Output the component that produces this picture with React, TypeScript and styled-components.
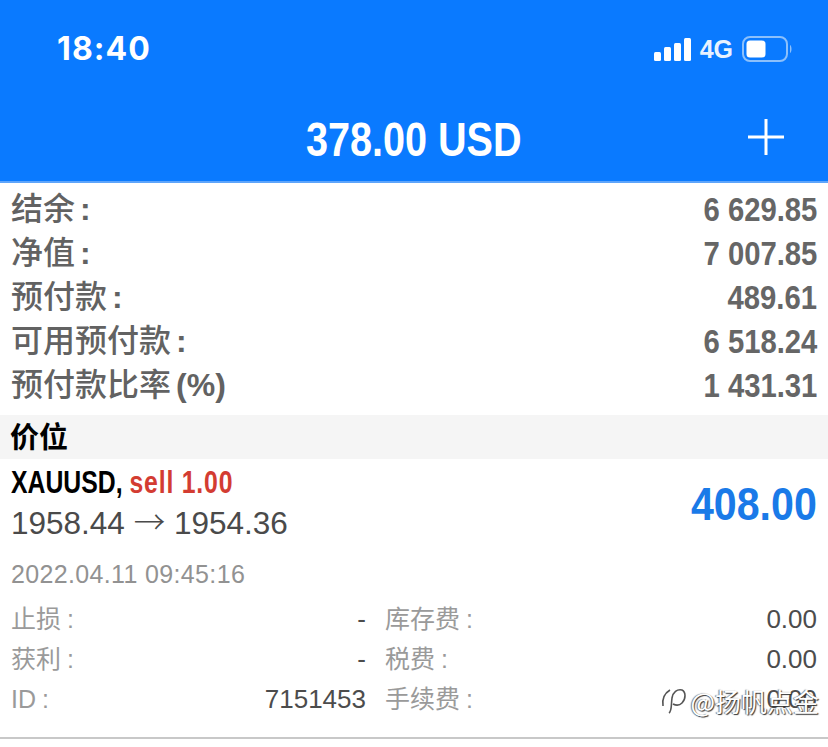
import React from "react";
import styled, { createGlobalStyle } from "styled-components";

const Global = createGlobalStyle`
  html, body { margin: 0; padding: 0; background: #fff; }
  body { font-family: "Liberation Sans", "Noto Sans CJK SC", sans-serif; }
`;
const Page = styled.div`width: 828px; height: 747px; overflow: hidden; background: #fff; display: flex; flex-direction: column;`;
const Header = styled.header`height: 181px; background: #0a7aff; border-bottom: 2px solid #5ea5fb; display: flex; flex-direction: column; color: #fff; flex: none;`;
const StatusBar = styled.div`height: 96px; padding: 2px 35px 0 57px; display: flex; align-items: center; justify-content: space-between; box-sizing: border-box; flex: none;`;
const Clock = styled.span`font: 700 32px/36px "Inter", "Liberation Sans", sans-serif; letter-spacing: 1.1px;`;
const StatusIcons = styled.div`display: flex; align-items: center; gap: 9px; font: 700 25px/24px "Liberation Sans", sans-serif; color: #e8f2ff;`;
const Title = styled.div`flex: 1; display: flex; align-items: center; justify-content: center; position: relative; margin-top: 3px;`;
const TitleText = styled.span`font: 700 48px/50px "Liberation Sans", sans-serif; transform: scaleX(.825); display: inline-block; white-space: nowrap;`;
const Plus = styled.svg`position: absolute; right: 43px; top: 19px;`;
const Summary = styled.section`padding: 4px 11px 8px; flex: none;`;
const SumRow = styled.div`height: 44px; display: flex; justify-content: space-between; align-items: center; color: #666; font: 700 34px/44px "Liberation Sans", "Noto Sans CJK SC", sans-serif;`;
const SumLabel = styled.span`font: 500 32px/44px "Noto Sans CJK SC", sans-serif; color: #626262; margin-top: -4px;`;
const Mark = styled.span`font: 700 32px/44px "Liberation Sans", sans-serif; padding-left: 5px;`;
const SumValue = styled.span`display: inline-block; transform: scaleX(.86); transform-origin: right center; white-space: nowrap;`;
const SectionBar = styled.div`height: 44px; box-sizing: border-box; background: #f5f5f5; padding: 0 10px 2px; font: 600 29px/40px "Noto Sans CJK SC", sans-serif; color: #000; flex: none;`;
const Position = styled.section`padding: 0 11px; flex: none;`;
const Top = styled.div`display: flex; justify-content: space-between; align-items: center; height: 92px;`;
const Names = styled.div`display: flex; flex-direction: column; margin-top: -8px;`;
const Symbol = styled.div`font: 700 31px/40px "Liberation Sans", sans-serif; color: #000; transform: scaleX(.8); transform-origin: left center; white-space: nowrap;`;
const Sell = styled.span`color: #d33c32; letter-spacing: 1px;`;
const Prices = styled.div`font: 400 31.5px/34px "Liberation Sans", sans-serif; color: #4a4a4a; white-space: nowrap;`;
const Arrow = styled.span`font-family: "Noto Sans CJK SC", sans-serif; font-weight: 300;`;
const Profit = styled.div`font: 700 47px/50px "Liberation Sans", sans-serif; color: #1a7ae8; transform: scaleX(.875); transform-origin: right center; margin-top: -3px;`;
const DateLine = styled.div`font: 400 25px/32px "Liberation Sans", sans-serif; color: #929292; margin-top: 7px; letter-spacing: .35px;`;
const Grid = styled.div`display: grid; grid-template-columns: 355px 1fr; column-gap: 19px; margin-top: 9px;`;
const Cell = styled.div`height: 40px; display: flex; justify-content: space-between; align-items: center; font: 400 26px/40px "Liberation Sans", "Noto Sans CJK SC", sans-serif;`;
const Key = styled.span`color: #9a9a9a; font-size: 25px;`;
const KeyMark = styled.span`padding-left: 6px;`;
const Val = styled.span`color: #4c4c4c;`;
const Divider = styled.div`height: 2px; background: #c8c8c8; margin-top: 18px; flex: none;`;
const Watermark = styled.div`position: absolute; right: 9px; top: 684px; display: flex; align-items: center; gap: 2px; color: #fff; font: 400 26px/34px "Noto Sans CJK SC", sans-serif; text-shadow: 1px 1px 1px #333, -1px 0 1px #777; white-space: nowrap;`;

const Signal = () => (
  <svg width="37" height="23" viewBox="0 0 37 23">
    <rect x="0" y="14" width="7" height="9" rx="1.5" fill="#fff" />
    <rect x="10" y="9" width="7" height="14" rx="1.5" fill="#fff" />
    <rect x="20" y="5" width="7" height="18" rx="1.5" fill="#fff" />
    <rect x="30" y="0" width="7" height="23" rx="1.5" fill="#fff" />
  </svg>
);
const Battery = () => (
  <svg width="51" height="26" viewBox="0 0 51 26">
    <rect x="1" y="1" width="44" height="24" rx="7" fill="none" stroke="#8cc0fb" strokeWidth="2" />
    <rect x="4.5" y="4.5" width="19" height="17" rx="3.5" fill="#fff" />
    <path d="M48 9 C50 10 50 16 48 17Z" fill="#8cc0fb" />
  </svg>
);

const summary: [string, string, string][] = [["结余", ":", "6 629.85"], ["净值", ":", "7 007.85"], ["预付款", ":", "489.61"], ["可用预付款", ":", "6 518.24"], ["预付款比率", "(%)", "1 431.31"]];
const details = [["止损", ":", "-", "库存费", ":", "0.00"], ["获利", ":", "-", "税费", ":", "0.00"], ["ID", ":", "7151453", "手续费", ":", "0.00"]];

export default function App() {
  return (
    <Page>
      <Global />
      <Header>
        <StatusBar>
          <Clock>18:40</Clock>
          <StatusIcons><Signal /><span>4G</span><Battery /></StatusIcons>
        </StatusBar>
        <Title>
          <TitleText>378.00 USD</TitleText>
          <Plus width="38" height="38" viewBox="0 0 38 38"><path d="M19 1V37M1 19H37" stroke="#fff" strokeWidth="3" /></Plus>
        </Title>
      </Header>
      <Summary>
        {summary.map(([k, m, v]) => (
          <SumRow key={k}><SumLabel>{k}<Mark>{m}</Mark></SumLabel><SumValue>{v}</SumValue></SumRow>
        ))}
      </Summary>
      <SectionBar>价位</SectionBar>
      <Position>
        <Top>
          <Names>
            <Symbol>XAUUSD, <Sell>sell 1.00</Sell></Symbol>
            <Prices>1958.44 <Arrow>→</Arrow> 1954.36</Prices>
          </Names>
          <Profit>408.00</Profit>
        </Top>
        <DateLine>2022.04.11 09:45:16</DateLine>
        <Grid>
          {details.map(([a, am, b, c, cm, d]) => (
            <React.Fragment key={a}>
              <Cell><Key>{a}<KeyMark>{am}</KeyMark></Key><Val>{b}</Val></Cell>
              <Cell><Key>{c}<KeyMark>{cm}</KeyMark></Key><Val>{d}</Val></Cell>
            </React.Fragment>
          ))}
        </Grid>
      </Position>
      <Divider />
      <Watermark>
        <svg width="28" height="30" viewBox="0 0 28 30"><path d="M9 27C12 25 11 19 12 12C13 6 17 3 22 4C26 6 26 13 22 17C19 20 15 19 13 18M3 20C2 13 5 7 10 4" fill="none" stroke="#555" strokeWidth="1.6" /></svg>
        <span>@扬帆点金</span>
      </Watermark>
    </Page>
  );
}
